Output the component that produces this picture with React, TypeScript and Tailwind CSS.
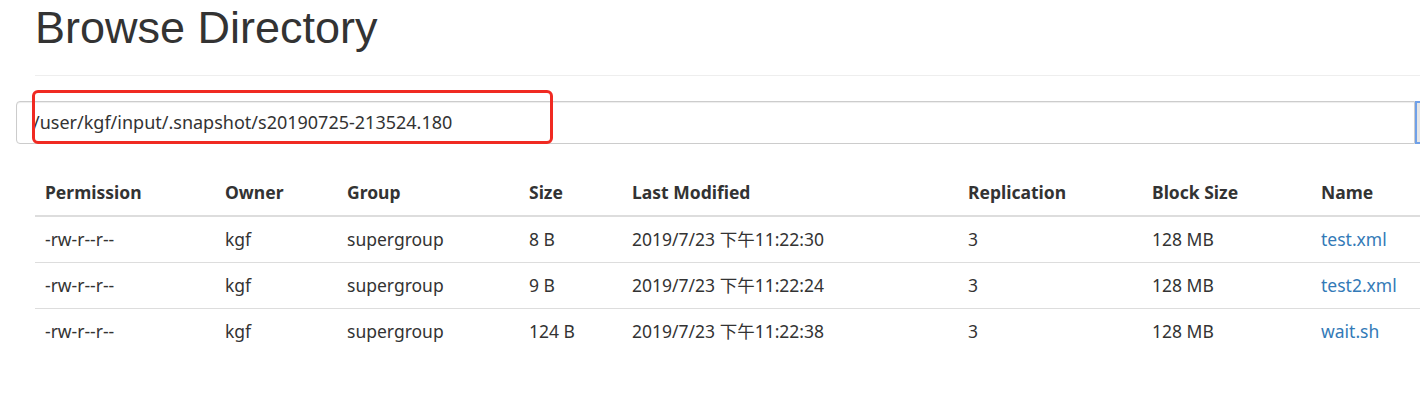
import React from 'react';

interface FileRow {
  permission: string;
  owner: string;
  group: string;
  size: string;
  modified: string;
  replication: string;
  blockSize: string;
  name: string;
}

const rows: FileRow[] = [
  { permission: '-rw-r--r--', owner: 'kgf', group: 'supergroup', size: '8 B', modified: '2019/7/23 下午11:22:30', replication: '3', blockSize: '128 MB', name: 'test.xml' },
  { permission: '-rw-r--r--', owner: 'kgf', group: 'supergroup', size: '9 B', modified: '2019/7/23 下午11:22:24', replication: '3', blockSize: '128 MB', name: 'test2.xml' },
  { permission: '-rw-r--r--', owner: 'kgf', group: 'supergroup', size: '124 B', modified: '2019/7/23 下午11:22:38', replication: '3', blockSize: '128 MB', name: 'wait.sh' },
];

const columns = [
  { label: 'Permission', width: 'w-[180px]' },
  { label: 'Owner', width: 'w-[122px]' },
  { label: 'Group', width: 'w-[182px]' },
  { label: 'Size', width: 'w-[103px]' },
  { label: 'Last Modified', width: 'w-[336px]' },
  { label: 'Replication', width: 'w-[184px]' },
  { label: 'Block Size', width: 'w-[169px]' },
  { label: 'Name', width: 'w-[150px]' },
];

const bodyFont = "font-['Noto_Sans','Noto_Sans_CJK_SC',sans-serif]";

export default function App() {
  return (
    <div className={`w-[1420px] h-[393px] overflow-hidden bg-white text-[#333] ${bodyFont}`}>
      <div className="pl-[35px]">
        <h1 className="font-['Liberation_Sans',Arial,sans-serif] text-[45px] leading-[50px] pt-[3px] text-[#333]">
          Browse Directory
        </h1>
        <div className="mt-[22px] border-t border-[#eee] w-[1420px]" />
      </div>

      <div className="relative mt-[25px] ml-[16px] flex">
        <div className="shrink-0 h-[43px] w-[1399px] border border-[#ccc] rounded-l-[4px] flex items-center pl-[16px] text-[18px] shadow-[inset_0_1px_1px_rgba(0,0,0,0.075)]">
          /user/kgf/input/.snapshot/s20190725-213524.180
        </div>
        <div className="shrink-0 h-[43px] w-[40px] border-2 border-[#6fa0e8] bg-[#e6e6e6]" />
        <div className="absolute left-[16px] top-[-11px] w-[521px] h-[54px] border-[3px] border-[#f02a22] rounded-[6px]" />
      </div>

      <div className="pl-[35px] mt-[26px]">
        <table className="w-[1420px] table-fixed border-collapse text-[17.5px]">
          <thead>
            <tr className="border-b-2 border-[#ddd]">
              {columns.map((c) => (
                <th key={c.label} className={`${c.width} text-left font-bold px-[10px] h-[46px] align-middle`}>
                  {c.label}
                </th>
              ))}
            </tr>
          </thead>
          <tbody>
            {rows.map((r) => (
              <tr key={r.name} className="border-t border-[#ddd] h-[46px]">
                <td className="px-[10px]">{r.permission}</td>
                <td className="px-[10px]">{r.owner}</td>
                <td className="px-[10px]">{r.group}</td>
                <td className="px-[10px]">{r.size}</td>
                <td className="px-[10px]">{r.modified}</td>
                <td className="px-[10px]">{r.replication}</td>
                <td className="px-[10px]">{r.blockSize}</td>
                <td className="px-[10px]">
                  <a href="#" className="text-[#337ab7]">{r.name}</a>
                </td>
              </tr>
            ))}
          </tbody>
        </table>
      </div>
    </div>
  );
}
